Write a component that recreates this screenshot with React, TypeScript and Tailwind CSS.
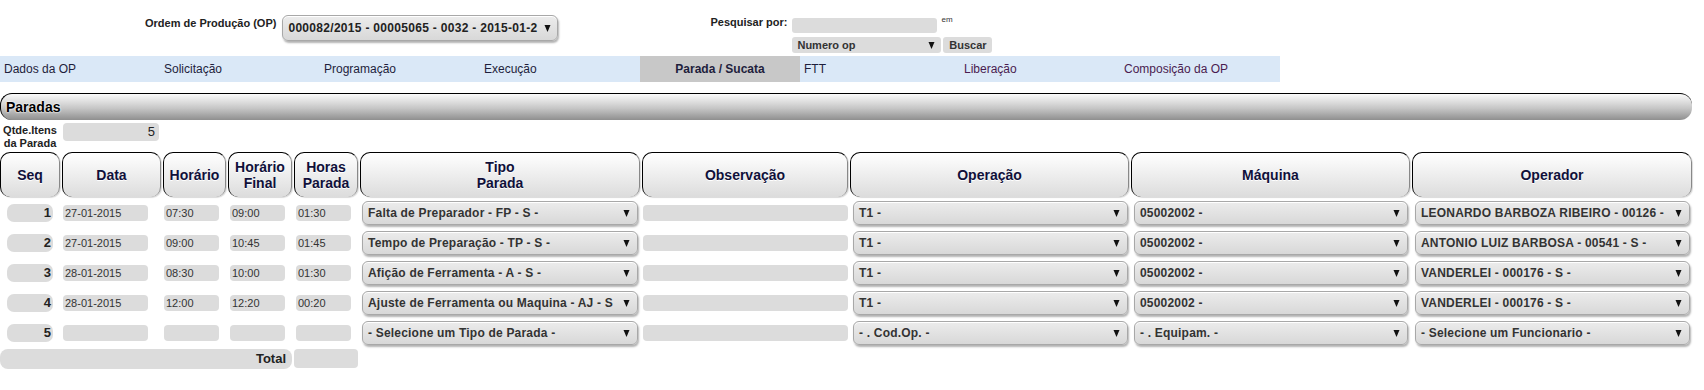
import React from "react";

const font = { fontFamily: '"Liberation Sans", Arial, sans-serif' };

const tabs = [
  { label: "Dados da OP", color: "text-[#1e1e3c]" },
  { label: "Solicitação", color: "text-[#1e1e3c]" },
  { label: "Programação", color: "text-[#1e1e3c]" },
  { label: "Execução", color: "text-[#1e1e3c]" },
  { label: "Parada / Sucata", active: true, color: "text-[#1e1e3c]" },
  { label: "FTT", color: "text-[#1e1e3c]" },
  { label: "Liberação", color: "text-[#4a1c50]" },
  { label: "Composição da OP", color: "text-[#4a1c50]" },
];

const rows = [
  {
    seq: "1",
    data: "27-01-2015",
    h: "07:30",
    hf: "09:00",
    hp: "01:30",
    tipo: "Falta de Preparador - FP - S -",
    op: "T1 -",
    maq: "05002002 -",
    oper: "LEONARDO BARBOZA RIBEIRO - 00126 -",
  },
  {
    seq: "2",
    data: "27-01-2015",
    h: "09:00",
    hf: "10:45",
    hp: "01:45",
    tipo: "Tempo de Preparação - TP - S -",
    op: "T1 -",
    maq: "05002002 -",
    oper: "ANTONIO LUIZ BARBOSA - 00541 - S -",
  },
  {
    seq: "3",
    data: "28-01-2015",
    h: "08:30",
    hf: "10:00",
    hp: "01:30",
    tipo: "Afição de Ferramenta - A - S -",
    op: "T1 -",
    maq: "05002002 -",
    oper: "VANDERLEI - 000176 - S -",
  },
  {
    seq: "4",
    data: "28-01-2015",
    h: "12:00",
    hf: "12:20",
    hp: "00:20",
    tipo: "Ajuste de Ferramenta ou Maquina - AJ - S",
    op: "T1 -",
    maq: "05002002 -",
    oper: "VANDERLEI - 000176 - S -",
  },
  {
    seq: "5",
    data: "",
    h: "",
    hf: "",
    hp: "",
    tipo: "- Selecione um Tipo de Parada -",
    op: "- . Cod.Op. -",
    maq: "- . Equipam. -",
    oper: "- Selecione um Funcionario -",
  },
];

function Arrow() {
  return (
    <svg width="7" height="8" viewBox="0 0 7 8" className="shrink-0">
      <polygon points="0.5,1 6.5,1 3.5,8" fill="#111" />
    </svg>
  );
}

function Select({ text, className = "" }: { text: string; className?: string }) {
  return (
    <div
      className={`flex items-center rounded-[6px] border border-[#a8a8a8] bg-[linear-gradient(to_bottom,#ececec,#d8d8d8)] pl-[5px] pr-[7px] shadow-[inset_0_1px_0_#fff,1px_2px_2px_rgba(0,0,0,0.3)] ${className}`}
    >
      <span className="flex-1 whitespace-nowrap text-[12px] font-bold tracking-[0.2px] text-[#333]">{text}</span>
      <Arrow />
    </div>
  );
}

function Head({ children }: { children: React.ReactNode }) {
  return (
    <div className="flex h-[45px] items-center justify-center rounded-[10px] border border-b-0 border-l-black border-r-[#888] border-t-black bg-[linear-gradient(to_bottom,#ffffff,#dcdcdc)] text-center text-[14px] font-bold leading-[16px] text-[#10103a] shadow-[1px_1px_1px_rgba(0,0,0,0.15)] [text-shadow:0_1px_0_#fff]">
      {children}
    </div>
  );
}

function Field({ text, className = "" }: { text: string; className?: string }) {
  return (
    <div className={`h-[16px] rounded-[4px] bg-[#dcdcdc] pl-[2px] text-[11px] leading-[16px] text-[#333] ${className}`}>
      {text}
    </div>
  );
}

export default function App() {
  return (
    <div style={font} className="w-[1704px] bg-white pb-[21px] text-[#222]">
      {/* topo */}
      <div className="flex h-[56px] items-start pl-[145px] pt-[15px]">
        <span className="mt-[2px] text-[11px] font-bold leading-[13px] text-[#222]">Ordem de Produção (OP)</span>
        <div className="ml-[6px] flex h-[26px] w-[276px] items-center rounded-[6px] border border-[#a8a8a8] bg-[linear-gradient(to_bottom,#ececec,#d8d8d8)] pl-[5px] pr-[6px] shadow-[inset_0_1px_0_#fff,1px_2px_2px_rgba(0,0,0,0.3)]">
          <span className="whitespace-nowrap text-[12px] font-bold tracking-[0.3px] text-[#222]">
            000082/2015 - 00005065 - 0032 - 2015-01-2
          </span>
          <span className="ml-auto">
            <Arrow />
          </span>
        </div>
        <span className="ml-[152px] mt-[1px] text-[11px] font-bold leading-[13px] text-[#222]">Pesquisar por:</span>
        <div className="ml-[5px] flex flex-col pt-[3px]">
          <div className="flex items-start">
            <div className="h-[15px] w-[145px] rounded-[3px] bg-[#dcdcdc]" />
            <span className="ml-[4px] mt-[-3px] text-[8px] leading-[10px] text-[#333]">em</span>
          </div>
          <div className="mt-[4px] flex gap-[2px]">
            <div className="flex h-[16px] w-[149px] items-center rounded-[3px] bg-[#dcdcdc] pl-[5px] pr-[6px]">
              <span className="flex-1 text-[11px] font-bold text-[#333]">Numero op</span>
              <Arrow />
            </div>
            <div className="flex h-[16px] w-[49px] items-center justify-center rounded-[3px] bg-[#dcdcdc] text-[11px] font-bold text-[#333]">
              Buscar
            </div>
          </div>
        </div>
      </div>

      {/* abas */}
      <div className="flex h-[26px] w-[1280px] bg-[#dae8f7]">
        {tabs.map((t) =>
          t.active ? (
            <div
              key={t.label}
              className="flex w-[160px] items-center justify-center bg-[#c8c8c8] text-[12px] font-bold text-[#1e1e3c]"
            >
              {t.label}
            </div>
          ) : (
            <div key={t.label} className={`flex w-[160px] items-center pl-[4px] text-[12px] ${t.color}`}>
              {t.label}
            </div>
          )
        )}
      </div>

      {/* barra Paradas */}
      <div className="mt-[11px] flex h-[27px] w-[1692px] items-center rounded-[12px] border-l border-t border-black bg-[linear-gradient(to_bottom,#fbfbfb,#c6c6c6_55%,#8f8f8f)] pl-[5px]">
        <span className="text-[14px] font-bold text-black [text-shadow:0_0_2px_#fff,0_0_2px_#fff]">Paradas</span>
      </div>

      {/* tabela */}
      <div className="mt-[3px] grid w-[1692px] grid-cols-[60px_99px_63px_64px_64px_280px_206px_279px_279px_280px] gap-[2px]">
        <div className="col-span-1 pt-[1px] text-center text-[11px] font-bold leading-[13px] text-[#222]">
          Qtde.Itens
          <br />
          da Parada
        </div>
        <div className="col-span-9 flex items-start">
          <div className="ml-[1px] h-[18px] w-[96px] rounded-[4px] bg-[#dcdcdc] pr-[4px] text-right text-[13px] leading-[18px] text-[#222]">
            5
          </div>
        </div>

        <Head>Seq</Head>
        <Head>Data</Head>
        <Head>Horário</Head>
        <Head>
          Horário
          <br />
          Final
        </Head>
        <Head>
          Horas
          <br />
          Parada
        </Head>
        <Head>
          Tipo
          <br />
          Parada
        </Head>
        <Head>Observação</Head>
        <Head>Operação</Head>
        <Head>Máquina</Head>
        <Head>Operador</Head>

        {rows.map((r) => (
          <React.Fragment key={r.seq}>
            <div className="flex h-[28px] items-center">
              <div className="ml-[7px] h-[18px] w-[46px] rounded-[7px] bg-[#dcdcdc] pr-[2px] text-right text-[13px] font-bold leading-[18px] text-[#222]">
                {r.seq}
              </div>
            </div>
            <div className="flex items-center">
              <Field text={r.data} className="ml-[1px] w-[85px]" />
            </div>
            <div className="flex items-center">
              <Field text={r.h} className="ml-[1px] w-[55px]" />
            </div>
            <div className="flex items-center">
              <Field text={r.hf} className="ml-[2px] w-[55px]" />
            </div>
            <div className="flex items-center">
              <Field text={r.hp} className="ml-[2px] w-[55px]" />
            </div>
            <div className="flex items-start pt-[2px]">
              <Select text={r.tipo} className="ml-[2px] h-[24px] w-[276px]" />
            </div>
            <div className="flex items-center">
              <Field text="" className="ml-[1px] w-[205px]" />
            </div>
            <div className="flex items-start pt-[2px]">
              <Select text={r.op} className="ml-[3px] h-[24px] w-[275px]" />
            </div>
            <div className="flex items-start pt-[2px]">
              <Select text={r.maq} className="ml-[3px] h-[24px] w-[274px]" />
            </div>
            <div className="flex items-start pt-[2px]">
              <Select text={r.oper} className="ml-[3px] h-[24px] w-[275px]" />
            </div>
          </React.Fragment>
        ))}

        <div className="col-span-4 flex h-[20px] items-center justify-end rounded-[8px] bg-[#dcdcdc] pr-[6px] text-[13px] font-bold text-[#222]">
          Total
        </div>
        <div className="h-[19px] rounded-[4px] bg-[#dcdcdc]" />
      </div>
    </div>
  );
}
